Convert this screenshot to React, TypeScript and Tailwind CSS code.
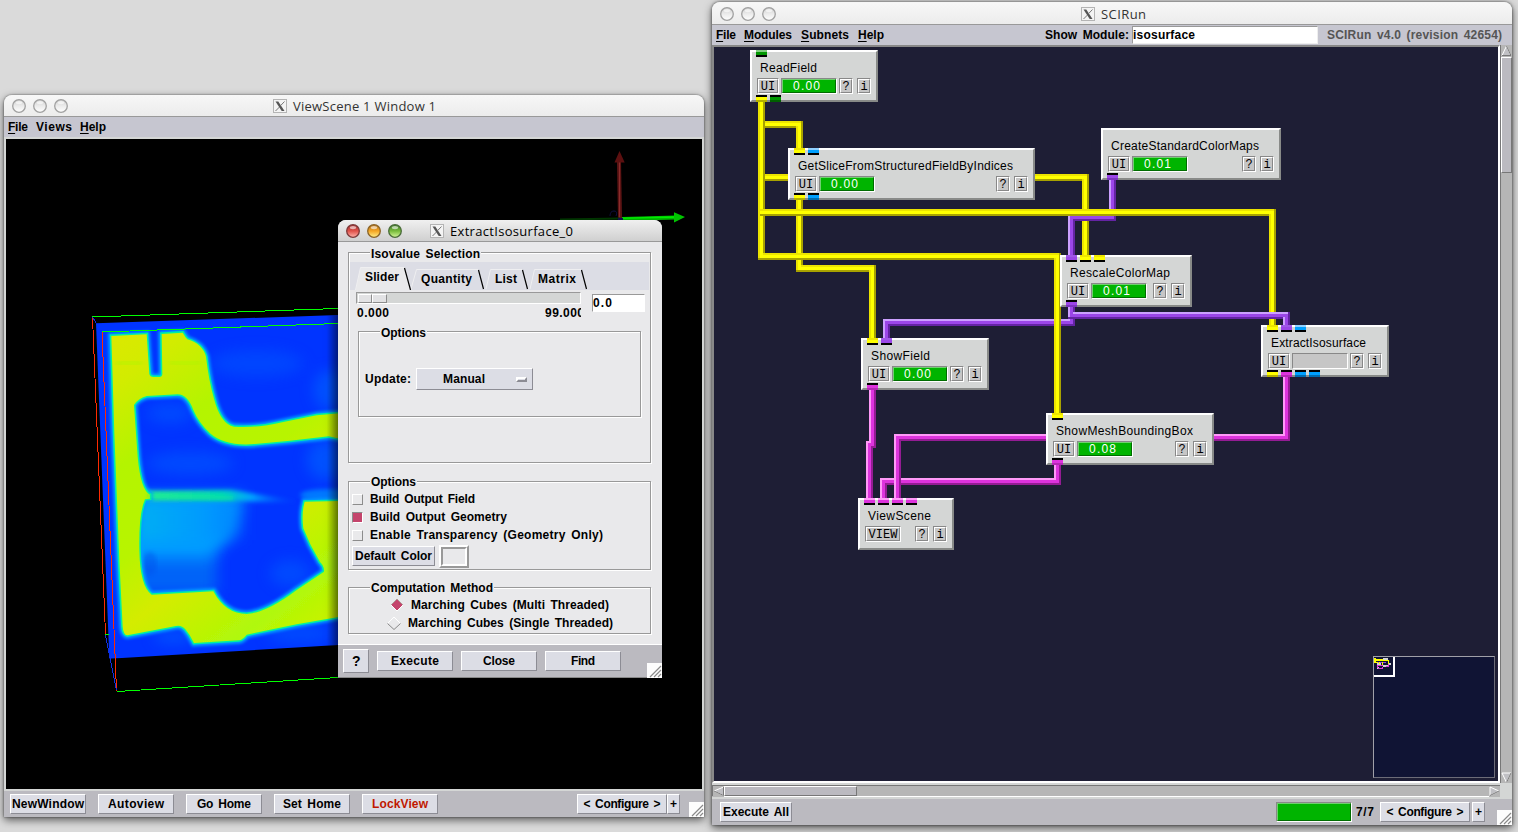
import { useLayoutEffect, useRef, useState } from "react";
import type { ReactNode } from "react";

/* Text run stretched to a fixed advance width, like a bitmap X11 font. */
function Fit({ w, text, u = false, className = "" }: { w: number; text: string; u?: boolean; className?: string }) {
  const ref = useRef<HTMLSpanElement>(null);
  const [ls, setLs] = useState(0);
  useLayoutEffect(() => {
    if (!ref.current) return;
    const natural = ref.current.getBoundingClientRect().width - ls * text.length;
    setLs((w - natural) / Math.max(1, text.length - 1));
  }, [w, text]);
  return (
    <span className={"inline-block shrink-0 whitespace-pre text-left " + className} style={{ width: w }}>
      <span ref={ref} style={{ letterSpacing: ls }}>
        {u ? (
          <>
            <span className="underline underline-offset-2 decoration-1">{text[0]}</span>
            {text.slice(1)}
          </>
        ) : (
          text
        )}
      </span>
    </span>
  );
}

function XIcon() {
  return (
    <svg width="14" height="14" viewBox="0 0 14 14" className="shrink-0">
      <rect x=".5" y=".5" width="13" height="13" fill="#f4f4f4" stroke="#b4b4b4" />
      <path d="M2.500 2.500h2.800l6.200 9.500H8.700z" fill="#555" />
      <path d="M11.500 2.500 7.500 6.700M6.500 8 2.500 12" stroke="#777" strokeWidth="1" />
    </svg>
  );
}

function Light({ top, mid, low, ring }: { top: string; mid: string; low: string; ring: string }) {
  const id = "l" + mid.slice(1);
  return (
    <svg width="14" height="14" viewBox="0 0 14 14" className="shrink-0">
      <defs>
        <linearGradient id={id} x1="0" y1="0" x2="0" y2="1">
          <stop offset="0" stopColor={top} />
          <stop offset=".5" stopColor={mid} />
          <stop offset="1" stopColor={low} />
        </linearGradient>
      </defs>
      <circle cx="7" cy="7" r="6.300" fill={"url(#" + id + ")"} stroke={ring} strokeWidth="1.300" />
      <ellipse cx="7" cy="3.600" rx="3.200" ry="1.700" fill="#fff" opacity=".6" />
    </svg>
  );
}

function TitleBar({ title, w, iconGap, active = false }: { title: string; w: number; iconGap: string; active?: boolean }) {
  return (
    <div
      className={
        "flex h-[22px] shrink-0 items-center rounded-t-lg border-b border-[#999] pl-2 bg-gradient-to-b " +
        (active ? "from-[#f0f0f0] to-[#d0d0d0]" : "from-[#f7f7f7] to-[#ececec]")
      }
    >
      <div className="flex gap-[7px]">
        {active ? (
          <>
            <Light top="#a03030" mid="#e0524a" low="#ffb4ac" ring="#7c3a3a" />
            <Light top="#b07020" mid="#f5a623" low="#fff08a" ring="#8a6326" />
            <Light top="#3c7a28" mid="#78bb3c" low="#d6f79a" ring="#4a6b3a" />
          </>
        ) : (
          [0, 1, 2].map((i) => <Light key={i} top="#cfcfcf" mid="#ebebeb" low="#ffffff" ring="#a0a0a0" />)
        )}
      </div>
      <div className={"flex items-center " + iconGap}>
        <XIcon />
        <Fit
          w={w}
          text={title}
          className={
            "ml-[6px] font-['Open_Sans',sans-serif] text-[13px] font-normal leading-5 [word-spacing:0px] " +
            (active ? "text-black" : "text-[#333]")
          }
        />
      </div>
    </div>
  );
}

const raised = "border border-t-white border-l-white border-b-[#8c8c94] border-r-[#8c8c94] bg-[#dcdde5] ";

function Btn({ text, w, className }: { text: string; w: number; className: string }) {
  return (
    <div className={"flex shrink-0 items-center justify-center " + raised + className}>
      <Fit w={w} text={text} />
    </div>
  );
}

function Grip() {
  return (
    <svg width="15" height="15" viewBox="0 0 15 15" className="shrink-0">
      <rect width="15" height="15" fill="#fdfdfd" />
      <path d="M3 14 14 3M7 14l7-7M11 14l3-3" stroke="#8a8a8a" strokeWidth="1.200" />
    </svg>
  );
}

/* ---------- ViewScene ---------- */

const BODY =
  "M124,108 L230,103 L238,222 Q240,231 250,231 L270,231 Q278,230 277,220 L275,102 L338,98 Q346,112 352,118 Q398,132 408,170 Q416,240 432,296 Q452,372 492,380 Q560,385 640,366 L740,346 L810,340 L810,416 L776,409 Q660,424 540,433 Q460,436 420,400 Q386,368 370,330 Q352,282 322,283 L230,288 Q204,295 192,315 L203,470 Q212,570 240,584 L240,596 L225,598 Q206,640 208,750 Q210,860 245,884 L430,874 Q466,942 530,942 Q590,938 680,870 L762,815 Q764,800 750,786 L722,735 L700,685 Q694,640 704,605 L810,603 L810,950 L680,973 L530,1004 Q518,1020 506,1021 L372,1029 Q360,1004 346,988 Q334,974 318,978 L172,1006 Q160,1004 158,980 L148,780 L133,400 Z";

function Volume() {
  return (
    <svg className="block" width="696" height="650" viewBox="6 139 696 650">
      <defs>
        <clipPath id="slice">
          <path d="M78,70 L804,45 V1035 L118,1076 Z" />
        </clipPath>
        <filter id="b1" x="-10%" y="-10%" width="120%" height="120%">
          <feGaussianBlur stdDeviation="4" />
        </filter>
        <filter id="b2" x="-10%" y="-10%" width="120%" height="120%">
          <feGaussianBlur stdDeviation="2" />
        </filter>
        <filter id="b3" x="-60%" y="-60%" width="220%" height="220%">
          <feGaussianBlur stdDeviation="20" />
        </filter>
        <filter id="b4" x="-10%" y="-200%" width="120%" height="500%">
          <feGaussianBlur stdDeviation="6" />
        </filter>
        <linearGradient id="band" gradientUnits="userSpaceOnUse" x1="215" y1="0" x2="690" y2="0">
          <stop offset="0" stopColor="#30f090" />
          <stop offset=".5" stopColor="#00d8b8" />
          <stop offset=".7" stopColor="#00a0ff" />
          <stop offset="1" stopColor="#0040ff" stopOpacity="0" />
        </linearGradient>
        <linearGradient id="pool" gradientUnits="userSpaceOnUse" x1="210" y1="0" x2="540" y2="0">
          <stop offset="0" stopColor="#00aef4" />
          <stop offset=".65" stopColor="#0098ff" />
          <stop offset="1" stopColor="#0060ff" stopOpacity="0" />
        </linearGradient>
        <linearGradient id="edge" gradientUnits="userSpaceOnUse" x1="770" y1="0" x2="804" y2="0">
          <stop offset="0" stopColor="#000" stopOpacity="0" />
          <stop offset="1" stopColor="#000" stopOpacity=".35" />
        </linearGradient>
        <linearGradient id="yg" gradientUnits="userSpaceOnUse" x1="120" y1="100" x2="800" y2="1000">
          <stop offset="0" stopColor="#dce800" />
          <stop offset=".12" stopColor="#d2ec00" />
          <stop offset=".3" stopColor="#b4f400" />
          <stop offset=".5" stopColor="#b8f400" />
          <stop offset=".65" stopColor="#d4ec00" />
          <stop offset=".85" stopColor="#b0f808" />
          <stop offset="1" stopColor="#d0f000" />
        </linearGradient>
      </defs>
      <rect x="6" y="139" width="696" height="650" fill="#000" />
      <g transform="translate(70 300) scale(.33333)">
        <g clipPath="url(#slice)">
          <rect x="60" y="30" width="760" height="1060" fill="#0034ff" />
          <g filter="url(#b3)" opacity=".5">
            <ellipse cx="560" cy="190" rx="140" ry="40" fill="#0058ff" />
            <ellipse cx="300" cy="340" rx="70" ry="30" fill="#0060ff" />
            <ellipse cx="360" cy="490" rx="130" ry="35" fill="#0060ff" />
            <ellipse cx="770" cy="480" rx="60" ry="60" fill="#0070ff" />
            <ellipse cx="660" cy="820" rx="60" ry="40" fill="#0060ff" />
            <ellipse cx="780" cy="270" rx="50" ry="60" fill="#0070ff" />
            <ellipse cx="690" cy="1000" rx="100" ry="30" fill="#0060ff" />
            <ellipse cx="310" cy="1010" rx="60" ry="20" fill="#0070ff" />
          </g>
          <rect x="170" y="760" width="270" height="120" fill="#0064f8" filter="url(#b3)" />
          <path d="M170,585 H520 L500,690 L420,780 H170Z" fill="#009cff" filter="url(#b3)" />
          <rect x="200" y="600" width="330" height="120" fill="url(#pool)" filter="url(#b3)" />
          <ellipse cx="240" cy="790" rx="20" ry="35" fill="#0048e8" opacity=".35" filter="url(#b4)" />
          <ellipse cx="770" cy="585" rx="80" ry="18" fill="#0078ff" filter="url(#b4)" />
          <path d="M215,574 L480,570 L690,602 L690,608 L500,604 L215,601Z" fill="url(#band)" filter="url(#b4)" />
          <path d={BODY} fill="none" stroke="#00a0ff" strokeWidth="20" filter="url(#b1)" />
          <path d={BODY} fill="none" stroke="#00f0a0" strokeWidth="9" filter="url(#b2)" />
          <path d={BODY} fill="url(#yg)" filter="url(#b2)" />
          <path d="M140,190 H215M300,188H390" stroke="#b0f400" strokeWidth="16" fill="none" opacity=".6" filter="url(#b4)" />
          <path d="M235,588 L490,594" stroke="#10e898" strokeWidth="12" opacity=".7" filter="url(#b4)" />
          <rect x="765" y="40" width="40" height="1000" fill="url(#edge)" />
        </g>
      </g>
      <g fill="none" strokeWidth="1" shapeRendering="crispEdges">
        <path d="M92 317 338 308.500M102 332 338 323.500M117 691.500 338 677.500M105 634.500h4" stroke="#00ff00" />
        <path d="M92.500 317 105.500 634.500M102 332 116.500 691" stroke="#ff2a00" />
        <path d="M92.500 317 96 323M105.500 635 116.500 690" stroke="#1030e0" />
      </g>
      <path d="M619 160 620 219" stroke="#5e1414" strokeWidth="4" />
      <path d="M619.500 160V218" stroke="#8a2c2c" strokeWidth="1" />
      <path d="M619.500 151 624.700 162.500H614.500Z" fill="#5c1010" />
      <path d="M560 219.500 620 218.500" stroke="#003800" strokeWidth="2" />
      <path d="M622 219 676 217.500" stroke="#00b800" strokeWidth="4" />
      <path d="M622 218.200 676 216.900" stroke="#00f000" strokeWidth="1.500" />
      <path d="M685 217 674 212.300V222.500Z" fill="#00c400" />
      <rect x="618" y="218" width="5" height="3" fill="#101050" />
      <path d="M610 216q0-5 4-5t2 5" stroke="#101040" fill="none" />
    </svg>
  );
}

function ViewScene() {
  return (
    <div className="absolute left-[4px] top-[95px] flex h-[722px] w-[700px] flex-col rounded-t-lg bg-[#d4d6d5] shadow-[0_3px_8px_rgba(0,0,0,0.6),0_0_2px_rgba(0,0,0,0.6)]">
      <TitleBar title="ViewScene 1 Window 1" w={143} iconGap="ml-[205px]" />
      <div className="flex h-[20px] shrink-0 items-center bg-[#c6c6d0] pl-[4px]">
        <Fit w={20} text="File" u />
        <Fit w={36} text="Views" className="ml-[8px]" />
        <Fit w={26} text="Help" u className="ml-[8px]" />
      </div>
      <div className="h-[654px] shrink-0 px-[2px] py-[2px]">
        <Volume />
      </div>
      <div className="flex flex-1 items-start bg-[#bbbac0] pl-[6px] pt-[3px]">
        <div className="flex gap-[12px]">
          <Btn text="NewWindow" w={72} className="h-[20px] w-[76px]" />
          <Btn text="Autoview" w={56} className="h-[20px] w-[76px]" />
          <Btn text="Go Home" w={54} className="h-[20px] w-[76px]" />
          <Btn text="Set Home" w={58} className="h-[20px] w-[76px]" />
          <Btn text="LockView" w={56} className="h-[20px] w-[76px] text-[#c01800]" />
        </div>
        <Btn text="< Configure >" w={77} className="ml-[139px] h-[20px] w-[90px]" />
        <Btn text="+" w={7} className="h-[20px] w-[13px]" />
        <div className="ml-auto mt-[8px]">
          <Grip />
        </div>
      </div>
    </div>
  );
}

/* ---------- Dialog ---------- */

function Group(props: { title: string; w: number; className: string; low?: boolean; children?: ReactNode }) {
  const { title, w, className, low = false, children } = props;
  return (
    <div className={"relative shrink-0 border border-[#999] shadow-[1px_1px_0_#fff,inset_1px_1px_0_#fff] " + className}>
      <div className={"absolute left-[21px] bg-[#e9e9eb] px-px leading-[14px] " + (low ? "-top-[6px]" : "-top-[7px]")}>
        <Fit w={w} text={title} className="align-top" />
      </div>
      {children}
    </div>
  );
}

function Check({ text, w, on = false }: { text: string; w: number; on?: boolean }) {
  return (
    <div className="flex h-[18px] items-center">
      <div
        className={
          "mt-[1px] h-[11px] w-[11px] border " +
          (on
            ? "border-t-[#8c8c8c] border-l-[#8c8c8c] border-b-white border-r-white bg-[#c4446c]"
            : "border-t-white border-l-white border-b-[#8c8c8c] border-r-[#8c8c8c]")
        }
      />
      <Fit w={w} text={text} className="ml-[7px]" />
    </div>
  );
}

function Radio({ text, w, on = false, className }: { text: string; w: number; on?: boolean; className: string }) {
  return (
    <div className={"flex h-[18px] items-center " + className}>
      <svg width="14" height="14" viewBox="0 0 14 14">
        {on ? (
          <>
            <path d="M7 1 13 7 7 13 1 7Z" fill="#c4446c" />
            <path d="M1 7 7 13 13 7" fill="none" stroke="#fff" />
            <path d="M1 7 7 1 13 7" fill="none" stroke="#998" strokeWidth=".6" />
          </>
        ) : (
          <>
            <path d="M.500 7.500 7 1 13.500 7.500" fill="none" stroke="#fff" />
            <path d="M.500 7.500 7 13.500 13.500 7.500" fill="none" stroke="#888" />
          </>
        )}
      </svg>
      <Fit w={w} text={text} className="ml-[7px]" />
    </div>
  );
}

function Dialog() {
  return (
    <div className="absolute left-[338px] top-[220px] flex h-[458px] w-[324px] flex-col rounded-t-lg bg-[#e9e9eb] shadow-[0_8px_14px_rgba(0,0,0,0.5)]">
      <TitleBar title="ExtractIsosurface_0" w={123} iconGap="ml-[28px]" active />
      <div className="flex h-[402px] shrink-0 flex-col pl-[10px] pt-[10px]">
        <Group title="Isovalue Selection" w={109} low className="h-[211px] w-[303px]">
          <div className="ml-px mt-[9px] h-[28px] w-[299px] bg-[#dcdde5]">
            <div className="relative flex h-[28px] items-center pl-[15px]">
              <svg className="absolute left-0 top-0" width="299" height="28" viewBox="350 262 299 28">
                <path d="M355.500 290 360.500 267.500H404.500L410.500 290Z" fill="#e9e9eb" />
                <g fill="none" stroke="#efeff1">
                  <path d="M355.500 290 360.500 267.500H404.500M411 289 416.500 269.500H478M486 289 490.500 269.500H522M530 289 534.500 269.500H581" />
                </g>
                <path d="M404.500 268 410.500 290M478.500 270 483.500 289M522.500 270 527.500 289M581.500 270 586.500 289" stroke="#000" strokeWidth="1.200" />
              </svg>
              <Fit w={34} text="Slider" className="relative mt-[2px]" />
              <Fit w={51} text="Quantity" className="relative ml-[22px] mt-[6px]" />
              <Fit w={22} text="List" className="relative ml-[23px] mt-[6px]" />
              <Fit w={38} text="Matrix" className="relative ml-[21px] mt-[6px]" />
            </div>
          </div>
          <div className="flex h-[40px] pl-[7px] pt-[2px]">
            <div className="w-[225px]">
              <div className="flex h-[12px] border border-b-white border-l-[#999] border-r-white border-t-[#999] bg-[#d4d6d5] p-px">
                <div className="h-[9px] w-[14px] border border-b-[#8c8c8c] border-l-white border-r-[#8c8c8c] border-t-white bg-[#e2e2e4]" />
                <div className="h-[9px] w-[15px] border border-b-[#8c8c8c] border-l-white border-r-[#8c8c8c] border-t-white bg-[#e2e2e4]" />
              </div>
              <div className="flex justify-between overflow-hidden pl-[1px] leading-[18px]">
                <Fit w={32} text="0.000" />
                <div className="w-[36px] overflow-hidden">
                  <Fit w={39} text="99.000" />
                </div>
              </div>
            </div>
            <div className="ml-[11px] mt-[2px] flex h-[18px] w-[53px] items-center border border-b-white border-l-[#999] border-r-white border-t-[#999] bg-white">
              <Fit w={19} text="0.0" />
            </div>
          </div>
          <Group title="Options" w={45} low className="ml-[9px] mt-[1px] h-[86px] w-[283px]">
            <div className="mt-[36px] flex h-[22px] items-center pl-[6px]">
              <Fit w={46} text="Update:" />
              <div className={"ml-[5px] flex h-[22px] w-[117px] items-center pl-[26px] " + raised}>
                <Fit w={42} text="Manual" />
                <div className="ml-[31px] h-[5px] w-[11px] border-2 border-b-[#8c8c94] border-l-white border-r-[#8c8c94] border-t-white" />
              </div>
            </div>
          </Group>
        </Group>
        <Group title="Options" w={45} className="mt-[18px] h-[89px] w-[303px]">
          <div className="pl-[3px] pt-[8px]">
            <Check text="Build Output Field" w={105} />
            <Check text="Build Output Geometry" w={137} on />
            <Check text="Enable Transparency (Geometry Only)" w={233} />
            <div className="flex items-center">
              <Btn text="Default Color" w={77} className="h-[20px] w-[83px]" />
              <div className="ml-[4px] mt-px h-[23px] w-[30px] border-2 border-b-[#999] border-l-white border-r-[#999] border-t-white">
                <div className="h-[19px] w-[26px] border-2 border-b-white border-l-[#999] border-r-white border-t-[#999]" />
              </div>
            </div>
          </div>
        </Group>
        <Group title="Computation Method" w={122} className="mt-[17px] h-[47px] w-[303px]">
          <div className="pt-[8px]">
            <Radio text="Marching Cubes (Multi Threaded)" w={198} on className="pl-[41px]" />
            <Radio text="Marching Cubes (Single Threaded)" w={205} className="pl-[38px]" />
          </div>
        </Group>
      </div>
      <div className="flex h-[34px] items-start border-b border-t border-b-[#888] border-t-white bg-[#bbbac0] pl-[5px] pt-[4px]">
        <Btn text="?" w={8} className="h-[24px] w-[26px] text-[14px]" />
        <Btn text="Execute" w={48} className="ml-[8px] mt-[2px] h-[20px] w-[76px]" />
        <Btn text="Close" w={32} className="ml-[8px] mt-[2px] h-[20px] w-[76px]" />
        <Btn text="Find" w={24} className="ml-[8px] mt-[2px] h-[20px] w-[76px]" />
        <div className="ml-auto mt-[14px]">
          <Grip />
        </div>
      </div>
    </div>
  );
}

/* ---------- SCIRun network ---------- */

type Kind = "y" | "p" | "m" | "g" | "b";
const PORT: Record<Kind, string> = {
  y: "bg-[#ffff00]",
  p: "bg-[#9b46e8]",
  m: "bg-[#dd33dd]",
  g: "bg-[#009600]",
  b: "bg-[#00a0ff]",
};
const PORT_TOP: Record<Kind, string> = {
  y: "border-t-[#eee600]",
  p: "border-t-[#a058e8]",
  m: "border-t-[#ff99f8]",
  g: "border-t-[#80cc80]",
  b: "border-t-[#90d0ff]",
};
const PORT_LOW: Record<Kind, string> = {
  y: "border-b-[#b4b000]",
  p: "border-b-[#7c34c0]",
  m: "border-b-[#b428b4]",
  g: "border-b-[#006000]",
  b: "border-b-[#006cb0]",
};

const WIRE: Record<string, [string, string, string]> = {
  y: ["#a8a200", "#ece400", "#ffff00"],
  p: ["#6424a4", "#ccA0ff", "#9b46e8"],
  m: ["#941c94", "#ff99f8", "#dd33dd"],
};

const WIRES: [string, string][] = [
  ["y", "M761.5 177.5H1085.5V258"],
  ["p", "M1112.5 178V217.5H1071.5V258"],
  ["y", "M799.5 198V268.5H872.5V341"],
  ["p", "M1071.5 305V322.5H886.5V341"],
  ["y", "M761.5 124.5H799.5V151"],
  ["y", "M761.5 100V256.5H1057.5V416"],
  ["y", "M759.5 212.5H1272.5V328"],
  ["p", "M1071.5 305V315.5H1286.5V328"],
  ["m", "M872.5 388V444.5H869.5V501"],
  ["m", "M1057.5 462V481.5H883.5V501"],
  ["m", "M1286.5 375V437.5H897.5V501"],
];

const place = {
  read: "left-[36px] top-[3px] w-[128px]",
  slice: "left-[74px] top-[101px] w-[247px]",
  create: "left-[387px] top-[81px] w-[180px]",
  rescale: "left-[346px] top-[208px] w-[132px]",
  show: "left-[147px] top-[291px] w-[128px]",
  extract: "left-[547px] top-[278px] w-[128px]",
  mesh: "left-[332px] top-[366px] w-[168px]",
  view: "left-[144px] top-[451px] w-[96px]",
};

function Tiny({ text, className }: { text: string; className: string }) {
  return (
    <div className={"h-[16px] border border-b-white border-l-[#888] border-r-white border-t-[#888] " + className}>
      <div className="flex h-[14px] items-center justify-center border border-b-[#888] border-l-white border-r-[#888] border-t-white bg-[#c6c6c6] pt-px font-['Liberation_Mono',monospace] text-[12px] font-normal leading-none">
        {text}
      </div>
    </div>
  );
}

function Module(props: { name: string; w: number; at: string; time?: string; ins?: Kind[]; outs?: Kind[]; view?: boolean }) {
  const { name, w, at, time, ins = [], outs = [], view = false } = props;
  return (
    <div
      className={
        "absolute h-[52px] border-2 border-b-[#888a88] border-l-white border-r-[#888a88] border-t-white bg-[#d4d6d5] text-black " + at
      }
    >
      <div className="absolute -top-[2px] left-[4px] flex gap-[3px]">
        {ins.map((k, i) => (
          <div key={i} className="w-[11px] border-b-2 border-b-black">
            <div className={"h-[5px] border-t-2 " + PORT[k] + " " + PORT_TOP[k]} />
          </div>
        ))}
      </div>
      <div className="h-[26px] pl-[8px] pt-[8px] leading-[16px]">
        <Fit w={w} text={name} className="font-['Liberation_Sans',Arial,sans-serif] text-[12px] font-normal" />
      </div>
      <div className="flex h-[16px] px-[5px]">
        <Tiny text={view ? "VIEW" : "UI"} className={view ? "w-[36px]" : "w-[22px]"} />
        {!view && (
          <div className="ml-[2px] h-[16px] w-[56px] border border-b-white border-l-[#888] border-r-white border-t-[#888]">
            {time ? (
              <div className="flex h-[14px] items-center border border-b-[#006c00] border-l-[#70d070] border-r-[#006c00] border-t-[#70d070] bg-[#00b400] pl-[10px] leading-none text-white">
                <Fit w={27} text={time} className="font-['Liberation_Sans',Arial,sans-serif] text-[12px] font-normal" />
              </div>
            ) : (
              <div className="h-[14px] bg-[#c6c6c6]" />
            )}
          </div>
        )}
        <Tiny text="?" className="ml-auto w-[14px]" />
        <Tiny text="i" className="ml-[4px] w-[14px]" />
      </div>
      <div className="absolute -bottom-[2px] left-[4px] flex gap-[3px]">
        {outs.map((k, i) => (
          <div key={i} className="w-[11px] border-t-2 border-t-black">
            <div className={"h-[5px] border-b-2 " + PORT[k] + " " + PORT_LOW[k]} />
          </div>
        ))}
      </div>
    </div>
  );
}

function Network() {
  return (
    <div className="relative h-[734px] w-[784px] overflow-hidden bg-[#1e1e35]">
      <svg className="absolute left-0 top-0" width="784" height="734" viewBox="714 47 784 734" shapeRendering="crispEdges" fill="none">
        {WIRES.map(([k, d], i) => (
          <g key={i}>
            <path d={d} stroke={WIRE[k][0]} strokeWidth="7" />
            <path d={d} stroke={WIRE[k][1]} strokeWidth="5" transform="translate(-1 -1)" />
            <path d={d} stroke={WIRE[k][2]} strokeWidth="3" />
          </g>
        ))}
      </svg>
      <Module name="ReadField" w={57} at={place.read} time="0.00" ins={["g"]} outs={["y", "g"]} />
      <Module name="GetSliceFromStructuredFieldByIndices" w={215} at={place.slice} time="0.00" ins={["y", "b"]} outs={["y", "b"]} />
      <Module name="CreateStandardColorMaps" w={148} at={place.create} time="0.01" outs={["p"]} />
      <Module name="RescaleColorMap" w={100} at={place.rescale} time="0.01" ins={["p", "y", "y"]} outs={["p"]} />
      <Module name="ShowField" w={59} at={place.show} time="0.00" ins={["y", "p"]} outs={["m"]} />
      <Module name="ExtractIsosurface" w={95} at={place.extract} ins={["y", "p", "b"]} outs={["y", "m", "b", "b"]} />
      <Module name="ShowMeshBoundingBox" w={137} at={place.mesh} time="0.08" ins={["y"]} outs={["m"]} />
      <Module name="ViewScene" w={63} at={place.view} ins={["m", "m", "m", "m"]} view />
      <div className="absolute left-[659px] top-[609px] h-[122px] w-[122px] border border-b-[#6c6c78] border-l-[#a0a0a8] border-r-[#6c6c78] border-t-[#a0a0a8] bg-[#101434]">
        <div className="h-[20px] w-[21px] border-b-2 border-r-2 border-white">
          <svg className="block" width="19" height="18" viewBox="0 0 19 18" shapeRendering="crispEdges">
            <path d="M9 1h5v2H9zM3 6h4v2H3zM15 6h2v2h-2zM9 8h5v2H9zM3 10h2v2H3z" fill="#d4d6d5" />
            <path d="M4 5h8v1H4z" fill="#9b46e8" />
            <path d="M0 1h2v5H0zM2 2h7v2H2zM2 5h2v1H2zM4 3h11v1H4zM14 3h1v4h-1zM8 5h1v4H8zM5 5h1v2H5z" fill="#ffff00" />
            <path d="M3 8h1v3H3zM4 11h5v1H4zM8 10h1v1H8zM4 8h5v1H4zM12 9h3v1h-3zM14 7h1v2h-1z" fill="#dd33dd" />
          </svg>
        </div>
      </div>
    </div>
  );
}

function Arrow({ d, e }: { d: string; e: string }) {
  return (
    <svg width="11" height="11" viewBox="0 0 11 11" className="block shrink-0">
      <rect width="11" height="11" fill="#b6b6b6" />
      <path d={d} fill="#c0c0c4" stroke="#fff" />
      <path d={e} fill="none" stroke="#777" />
    </svg>
  );
}

function SCIRun() {
  return (
    <div className="absolute left-[712px] top-[2px] flex h-[823px] w-[800px] flex-col rounded-t-lg bg-[#d4d6d5] shadow-[0_3px_8px_rgba(0,0,0,0.6),0_0_3px_rgba(0,0,0,0.6)]">
      <div className="h-[23px] shrink-0 rounded-t-lg bg-[#f6f6f6] pt-px">
        <TitleBar title="SCIRun" w={45} iconGap="ml-[305px]" />
      </div>
      <div className="flex h-[20px] shrink-0 items-center bg-[#c6c6d0] pl-[4px]">
        <Fit w={20} text="File" u />
        <Fit w={48} text="Modules" u className="ml-[8px]" />
        <Fit w={48} text="Subnets" u className="ml-[9px]" />
        <Fit w={26} text="Help" u className="ml-[9px]" />
        <Fit w={84} text="Show Module:" className="ml-[161px]" />
        <div className="ml-[3px] flex h-[18px] w-[186px] items-center border border-b-[#eee] border-l-[#999] border-r-[#eee] border-t-[#999] bg-white">
          <Fit w={62} text="isosurface" />
        </div>
        <Fit w={175} text="SCIRun v4.0 (revision 42654)" className="ml-[9px] text-[#555]" />
      </div>
      <div className="flex h-[738px] shrink-0">
        <div className="border-2 border-b-white border-l-[#888] border-r-white border-t-[#888]">
          <Network />
        </div>
        <div className="flex w-[12px] flex-col border-l border-[#777] bg-[#b6b6b6]">
          <Arrow d="M5.500 1 1 10.500H10Z" e="M5.500 1 10 10.500H1" />
          <div className="mt-px h-[116px] border border-b-[#777] border-l-white border-r-[#777] border-t-white bg-[#bbbac0]" />
          <div className="mt-auto">
            <Arrow d="M1 1H10L5.500 10.500Z" e="M10 1 5.500 10.500" />
          </div>
        </div>
      </div>
      <div className="h-[14px] shrink-0 pt-[2px]">
        <div className="flex h-[12px] w-[788px] border-b border-l border-t border-b-white border-l-[#777] border-t-[#777] bg-[#b6b6b6]">
          <Arrow d="M10.500 1 1 5 10.500 9.500Z" e="M1 5 10.500 9.500V1" />
          <div className="h-[10px] w-[133px] border border-b-[#777] border-l-white border-r-[#777] border-t-white bg-[#bbbac0]" />
          <div className="ml-auto">
            <Arrow d="M1 1V9.500L10 5Z" e="M1 9.500 10 5" />
          </div>
        </div>
      </div>
      <div className="mt-[2px] flex flex-1 items-start bg-[#bbbac0] pl-[8px] pt-[3px]">
        <Btn text="Execute All" w={66} className="h-[20px] w-[72px]" />
        <div className="ml-[484px] h-[20px] w-[76px] border border-b-white border-l-[#888] border-r-white border-t-[#888]">
          <div className="h-[18px] border border-b-[#006c00] border-l-[#70d070] border-r-[#006c00] border-t-[#70d070] bg-[#00b400]" />
        </div>
        <Fit w={18} text="7/7" className="ml-[4px] leading-5" />
        <Btn text="< Configure >" w={77} className="ml-[6px] h-[20px] w-[90px]" />
        <Btn text="+" w={7} className="ml-[2px] h-[20px] w-[13px]" />
        <div className="ml-auto mt-[8px]">
          <Grip />
        </div>
      </div>
    </div>
  );
}

export default function App() {
  return (
    <div className="relative h-[832px] w-[1518px] overflow-hidden bg-[#dadada] font-['Liberation_Sans',Arial,sans-serif] text-[12px] font-bold leading-[16px] text-black [word-spacing:2px]">
      <ViewScene />
      <SCIRun />
      <Dialog />
    </div>
  );
}
